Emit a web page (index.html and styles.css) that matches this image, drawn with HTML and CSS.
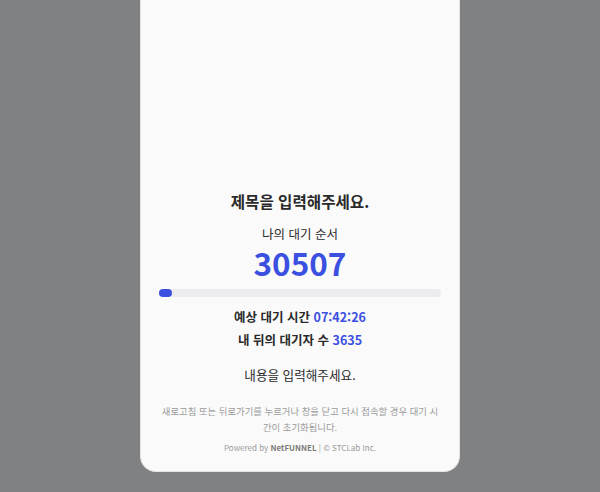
FILE: index.html
```html
<!DOCTYPE html>
<html lang="ko">
<head>
<meta charset="utf-8">
<link rel="stylesheet" href="styles.css">
</head>
<body>
<div class="page">
  <div class="card">
    <h1 class="title">제목을 입력해주세요.</h1>
    <div class="label">나의 대기 순서</div>
    <div class="number">30507</div>
    <div class="bar"><div class="bar-fill"></div></div>
    <div class="stat stat-first">예상 대기 시간 <span class="hl">07:42:26</span></div>
    <div class="stat">내 뒤의 대기자 수 <span class="hl">3635</span></div>
    <div class="content">내용을 입력해주세요.</div>
    <div class="notice">새로고침 또는 뒤로가기를 누르거나 창을 닫고 다시 접속할 경우 대기 시간이 초기화됩니다.</div>
    <div class="powered">Powered by <b>NetFUNNEL</b> | © STCLab Inc.</div>
  </div>
</div>
</body>
</html>
```

FILE: styles.css
```css
html, body {
  margin: 0;
  padding: 0;
  height: 100%;
}
body {
  background: #808182;
  font-family: "Noto Sans CJK KR", "Noto Sans", sans-serif;
  color: #2a2a2a;
}
.page {
  display: flex;
  justify-content: center;
  height: 492px;
}
.card {
  box-sizing: border-box;
  width: 320px;
  height: 472px;
  background: #fafafa;
  border: 1px solid #e4e4e4;
  border-top: none;
  border-radius: 0 0 16px 16px;
  display: flex;
  flex-direction: column;
  justify-content: flex-end;
  align-items: center;
  padding: 0 18px 16px;
  text-align: center;
}
.title {
  margin: 0;
  font-size: 15.6px;
  font-weight: 700;
  line-height: 22px;
}
.label {
  margin-top: 13px;
  font-size: 12.5px;
  line-height: 18px;
}
.number {
  margin-top: 1px;
  font-size: 31.5px;
  font-weight: 700;
  color: #3b50e0;
  line-height: 36px;
}
.bar {
  align-self: stretch;
  height: 8px;
  border-radius: 4px;
  background: #ececf0;
  margin-top: 9px;
  display: flex;
}
.bar-fill {
  width: 13px;
  border-radius: 4px;
  background: #3b50e0;
}
.stat {
  font-size: 12.5px;
  font-weight: 700;
  line-height: 23px;
}
.stat-first { margin-top: 8px; }
.hl { color: #3b50e0; }
.content {
  margin-top: 14px;
  font-size: 12.6px;
  line-height: 20px;
}
.notice {
  margin-top: 18px;
  font-size: 9.4px;
  line-height: 16px;
  color: #9a9a9a;
}
.powered {
  margin-top: 6px;
  font-size: 8px;
  line-height: 14px;
  color: #9a9a9a;
}
.powered b { color: #7a7a7a; }
```
